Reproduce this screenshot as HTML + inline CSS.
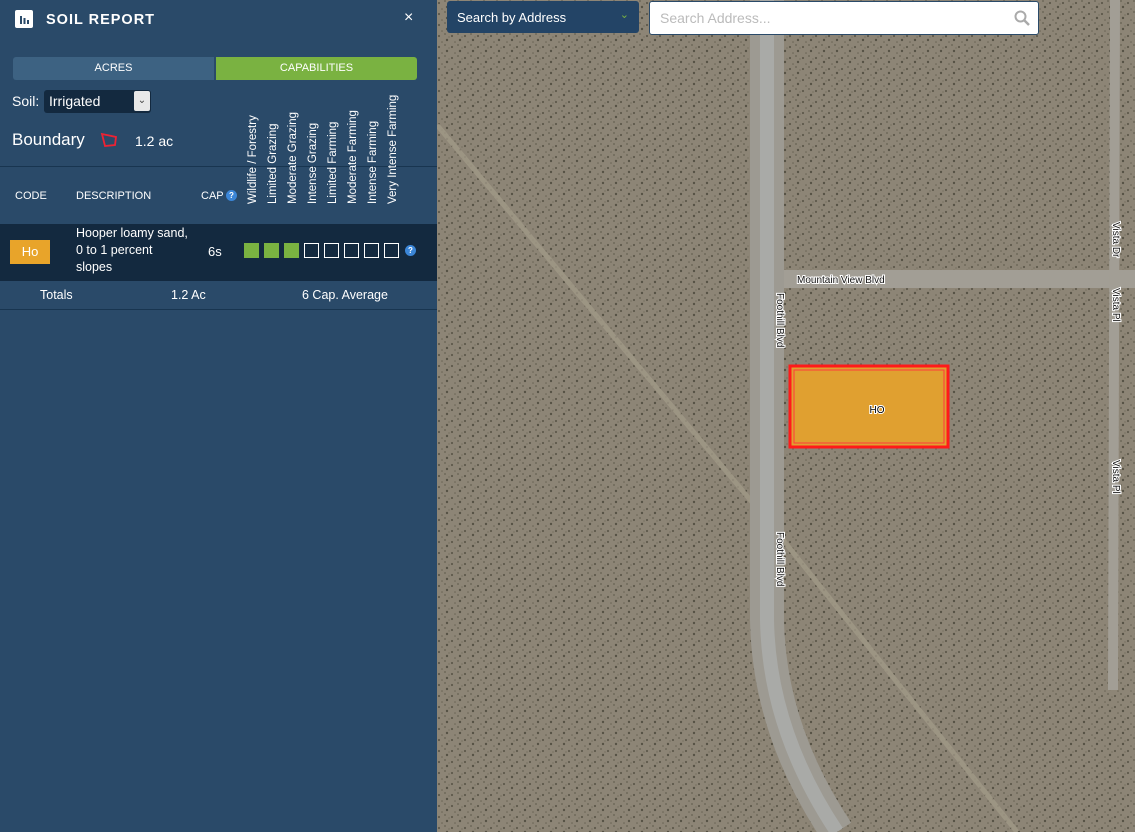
<!DOCTYPE html>
<html><head><meta charset="utf-8"><style>
*{margin:0;padding:0;box-sizing:border-box}
body{width:1135px;height:832px;overflow:hidden;position:relative;font-family:"Liberation Sans",sans-serif;background:#8a8172}
#panel{position:absolute;left:0;top:0;width:437px;height:832px;background:#2a4a69;color:#fff}
.abs{position:absolute}
.rot{position:absolute;transform-origin:left top;transform:rotate(-90deg);white-space:nowrap;font-size:11.5px;color:#fff}
.box{position:absolute;top:243px;width:15px;height:15px;border:1px solid #fff}
.box.g{background:#7ab241;border-color:#7ab241}
</style></head><body>
<svg class="abs" style="left:437px;top:0" width="698" height="832">
<defs><pattern id="d" width="13" height="11" patternUnits="userSpaceOnUse">
<circle cx="2" cy="3" r="1.1" fill="#4a4638"/><circle cx="8" cy="1" r="0.9" fill="#555041"/><circle cx="10" cy="7" r="1.2" fill="#3f3c30"/><circle cx="5" cy="9" r="0.8" fill="#5a5545"/><circle cx="12" cy="4" r="0.6" fill="#5a5545"/>
</pattern></defs>
<rect width="698" height="832" fill="#8d8576"/>
<rect width="698" height="832" fill="url(#d)" opacity="0.7"/>
<path d="M0 125 L330 520 L580 832" stroke="#a09887" stroke-width="5" fill="none" opacity="0.8"/>
<path d="M330 0 L330 620 Q332 730 400 832" stroke="#9d9a92" stroke-width="34" fill="none"/>
<path d="M330 0 L330 620 Q332 730 400 832" stroke="#a9aaa7" stroke-width="14" fill="none"/>
<path d="M347 279 L698 279" stroke="#a29e95" stroke-width="18" fill="none"/>
<path d="M678 0 L676 690" stroke="#a29e95" stroke-width="10" fill="none"/>
<rect x="353" y="366" width="158" height="81" fill="#e0a030" stroke="#ff1a1a" stroke-width="3"/>
<rect x="357" y="370" width="150" height="73" fill="none" stroke="#ff3a3a" stroke-width="1"/>
<text x="440" y="413" font-size="10" font-family="Liberation Sans" text-anchor="middle" fill="#000" stroke="#fff" stroke-width="2" paint-order="stroke">HO</text>
<text x="360" y="283" font-size="10" font-family="Liberation Sans" fill="#111" stroke="#fff" stroke-width="2" paint-order="stroke">Mountain View Blvd</text>
<text transform="translate(340,293) rotate(90)" font-size="10" font-family="Liberation Sans" fill="#111" stroke="#fff" stroke-width="2" paint-order="stroke">Foothill Blvd</text>
<text transform="translate(340,532) rotate(90)" font-size="10" font-family="Liberation Sans" fill="#111" stroke="#fff" stroke-width="2" paint-order="stroke">Foothill Blvd</text>
<text transform="translate(676,222) rotate(90)" font-size="10" font-family="Liberation Sans" fill="#111" stroke="#fff" stroke-width="2" paint-order="stroke">Vista Dr</text>
<text transform="translate(676,288) rotate(90)" font-size="10" font-family="Liberation Sans" fill="#111" stroke="#fff" stroke-width="2" paint-order="stroke">Vista Pl</text>
<text transform="translate(676,460) rotate(90)" font-size="10" font-family="Liberation Sans" fill="#111" stroke="#fff" stroke-width="2" paint-order="stroke">Vista Pl</text>
</svg>
<div class="abs" style="left:447px;top:1px;width:192px;height:32px;background:#234466;border-radius:3px;color:#fff;font-size:13px;padding:9px 10px">Search by Address<span style="position:absolute;right:10px;top:7px;color:#7ab241;font-size:11px">⌄</span></div>
<div class="abs" style="left:649px;top:1px;width:390px;height:34px;background:#fff;border:1px solid #2a4a69;border-radius:3px;color:#bbb;font-size:14px;padding:8px 10px">Search Address...
<svg class="abs" style="right:8px;top:8px" width="16" height="16"><circle cx="6.5" cy="6.5" r="5" stroke="#aaa" stroke-width="2" fill="none"/><path d="M10 10 L15 15" stroke="#aaa" stroke-width="2.5"/></svg></div>

<div id="panel">
<svg class="abs" style="left:15px;top:10px" width="18" height="18"><rect width="18" height="18" rx="2" fill="#fff"/><rect x="5" y="6" width="2" height="8" fill="#2a4a69"/><rect x="8.5" y="8" width="2" height="6" fill="#2a4a69"/><rect x="12" y="10" width="2" height="4" fill="#2a4a69"/></svg>
<div class="abs" style="left:46px;top:12px;font-size:14.5px;font-weight:bold;letter-spacing:1px">SOIL REPORT</div>
<div class="abs" style="left:404px;top:9px;font-size:16px">×</div>
<div class="abs" style="left:13px;top:57px;width:201px;height:23px;background:#3d6282;border-radius:3px 0 0 3px;font-size:11px;text-align:center;line-height:23px">ACRES</div>
<div class="abs" style="left:216px;top:57px;width:201px;height:23px;background:#7ab241;border-radius:0 3px 3px 0;font-size:11px;text-align:center;line-height:23px">CAPABILITIES</div>
<div class="abs" style="left:12px;top:93px;font-size:14px">Soil:</div>
<div class="abs" style="left:44px;top:90px;width:107px;height:23px;background:#13293f;border-radius:3px;font-size:14px;padding:3px 5px">Irrigated<div class="abs" style="right:1px;top:1px;width:16px;height:20px;background:#e8e8e8;color:#444;font-size:10px;text-align:center;line-height:20px;border-radius:2px">⌄</div></div>
<div class="abs" style="left:12px;top:130px;font-size:17px">Boundary</div>
<svg class="abs" style="left:100px;top:132px" width="20" height="16"><path d="M2 2 L16 5 L15 13 L5 14 Z" fill="none" stroke="#e23" stroke-width="1.8"/></svg>
<div class="abs" style="left:135px;top:133px;font-size:14px">1.2 ac</div>
<div class="abs" style="left:0;top:166px;width:437px;height:1px;background:#183550"></div>
<div class="abs" style="left:15px;top:190px;font-size:11px">CODE</div>
<div class="abs" style="left:76px;top:190px;font-size:11px">DESCRIPTION</div>
<div class="abs" style="left:201px;top:190px;font-size:11px">CAP</div>
<div class="abs" style="left:226px;top:190px;width:11px;height:11px;border-radius:50%;background:#3b86d8;font-size:8px;font-weight:bold;text-align:center;line-height:11px">?</div>
<div class="rot" style="left:247px;top:204px">Wildlife / Forestry</div>
<div class="rot" style="left:267px;top:204px">Limited Grazing</div>
<div class="rot" style="left:287px;top:204px">Moderate Grazing</div>
<div class="rot" style="left:307px;top:204px">Intense Grazing</div>
<div class="rot" style="left:327px;top:204px">Limited Farming</div>
<div class="rot" style="left:347px;top:204px">Moderate Farming</div>
<div class="rot" style="left:367px;top:204px">Intense Farming</div>
<div class="rot" style="left:387px;top:204px">Very Intense Farming</div>
<div class="abs" style="left:0;top:224px;width:437px;height:57px;background:#13293f"></div>
<div class="abs" style="left:10px;top:240px;width:40px;height:24px;background:#e8a42a;font-size:13px;text-align:center;line-height:24px">Ho</div>
<div class="abs" style="left:76px;top:225px;font-size:12.5px;line-height:17px">Hooper loamy sand,<br>0 to 1 percent<br>slopes</div>
<div class="abs" style="left:208px;top:244px;font-size:13px">6s</div>
<div class="box g" style="left:244px"></div><div class="box g" style="left:264px"></div><div class="box g" style="left:284px"></div>
<div class="box" style="left:304px"></div><div class="box" style="left:324px"></div><div class="box" style="left:344px"></div><div class="box" style="left:364px"></div><div class="box" style="left:384px"></div>
<div class="abs" style="left:405px;top:245px;width:11px;height:11px;border-radius:50%;background:#3b86d8;font-size:8px;font-weight:bold;text-align:center;line-height:11px">?</div>
<div class="abs" style="left:40px;top:288px;font-size:12.5px">Totals</div>
<div class="abs" style="left:171px;top:288px;font-size:12.5px">1.2 Ac</div>
<div class="abs" style="left:302px;top:288px;font-size:12.5px">6 Cap. Average</div>
<div class="abs" style="left:0;top:309px;width:437px;height:1px;background:#183550"></div>
</div>
</body></html>
